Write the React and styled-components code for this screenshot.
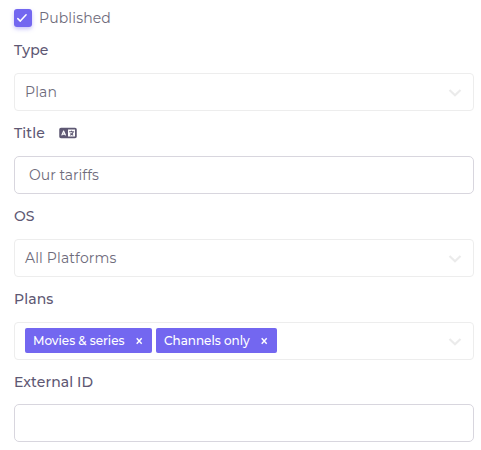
import React, { useState } from 'react';
import styled, { createGlobalStyle, ThemeProvider } from 'styled-components';
import { FaLanguage } from 'react-icons/fa6';

const theme = {
	colors: {
		primary: '#7367f0',
		label: '#5e5873',
		text: '#6e6b7b',
		border: '#d8d6de',
		lightBorder: '#ededed',
		arrow: '#ebebeb'
	}
};

const GlobalStyle = createGlobalStyle`
	* {
		box-sizing: border-box;
	}
	body {
		margin: 0;
		background: #fff;
		font-family: Montserrat, Inter, sans-serif;
		font-size: 14px;
		letter-spacing: .14px;
		color: ${({ theme }) => theme.colors.text};
	}
`;

const Form = styled.form`
	width: 481px;
	padding: 8px 7px 0 14px;
`;
const Text = styled.span`
	white-space: nowrap;
`;
const CheckRow = styled.label`
	display: flex;
	align-items: center;
	gap: 7px;
	height: 20px;
	cursor: pointer;
`;
const HiddenCheckbox = styled.input`display: none;`;
const Box = styled.span`
	display: flex;
	align-items: center;
	justify-content: center;
	width: 18px;
	height: 18px;
	border-radius: 3px;
	background: ${({ theme, $checked }) => ($checked ? theme.colors.primary : '#fff')};
	box-shadow: 0 2px 4px 0 rgba(115, 103, 240, .4);
	svg {
		margin-right: 2px;
	}
`;
const Group = styled.div`
	height: 83px;
	padding-top: 11px;
`;
const Label = styled.div`
	display: flex;
	align-items: center;
	gap: 14px;
	height: 21px;
	margin-bottom: ${({ $gap }) => $gap || 13}px;
	color: ${({ theme }) => theme.colors.label};
	font-weight: 500;
	letter-spacing: .09px;
	svg {
		width: 18px;
		height: 14px;
	}
`;
const Control = styled.div`
	display: flex;
	align-items: center;
	width: 460px;
	height: 38px;
	padding: 0 11px 0 10px;
	border: 1px solid ${({ theme }) => theme.colors.lightBorder};
	border-radius: 4px;
	background: #fff;
`;
const Input = styled.input`
	display: block;
	width: 460px;
	height: 38px;
	padding: 0 14px;
	border: 1px solid ${({ theme }) => theme.colors.border};
	border-radius: 5px;
	outline: none;
	background: #fff;
	color: inherit;
	font: inherit;
	letter-spacing: 0;
`;
const Chip = styled.span`
	display: flex;
	align-items: center;
	justify-content: space-between;
	width: ${({ $width }) => $width}px;
	height: 25px;
	margin: 0 4px 1px 0;
	padding: 0 9px 0 8px;
	border-radius: 2px;
	background: ${({ theme }) => theme.colors.primary};
	color: #fff;
	font-size: 12px;
	font-weight: 500;
	letter-spacing: -.03px;
`;
const Remove = styled.button`
	display: flex;
	padding: 0;
	border: none;
	background: none;
	cursor: pointer;
`;
const Indicator = styled.svg`
	margin: 1px 0 0 auto;
`;

const Arrow = () => (
	<Indicator width="14" height="8" viewBox="0 0 14 8" fill="none" stroke={theme.colors.arrow} strokeWidth="2.2">
		<path d="M1.5 1 7 6.2 12.5 1" />
	</Indicator>
);

const Cross = () => (
	<svg width="8" height="8" viewBox="0 0 8 8" fill="none" stroke="#fff" strokeWidth="1.4">
		<path d="M1.7 1.2 6.7 6.8M6.7 1.2 1.7 6.8" />
	</svg>
);

const Field = ({ label, gap, icon, children }) => (
	<Group>
		<Label $gap={gap}>
			<Text>{label}</Text>
			{icon}
		</Label>
		{children}
	</Group>
);

const initialPlans = [
	{ name: 'Movies & series', width: 127 },
	{ name: 'Channels only', width: 121 }
];

const App = () => {
	const [ published, setPublished ] = useState(true);
	const [ title, setTitle ] = useState('Our tariffs');
	const [ externalId, setExternalId ] = useState('');
	const [ plans, setPlans ] = useState(initialPlans);

	return (
		<ThemeProvider theme={theme}>
			<GlobalStyle />
			<Form>
				<CheckRow>
					<HiddenCheckbox type="checkbox" checked={published} onChange={() => setPublished(!published)} />
					<Box $checked={published}>
						<svg width="12" height="12" viewBox="0 0 12 12" fill="none" stroke="#fff" strokeWidth="1.5" strokeLinecap="round" strokeLinejoin="round">
							<path d="M1.8 6.6 4.3 9.1 10.1 2.7" />
						</svg>
					</Box>
					<Text>Published</Text>
				</CheckRow>
				<Field label="Type">
					<Control>
						<Text>Plan</Text>
						<Arrow />
					</Control>
				</Field>
				<Field label="Title" icon={<FaLanguage />}>
					<Input value={title} onChange={(e) => setTitle(e.target.value)} />
				</Field>
				<Field label="OS">
					<Control>
						<Text>All Platforms</Text>
						<Arrow />
					</Control>
				</Field>
				<Field label="Plans">
					<Control>
						{plans.map(({ name, width }) => (
							<Chip key={name} $width={width}>
								<Text>{name}</Text>
								<Remove type="button" onClick={() => setPlans(plans.filter((plan) => plan.name !== name))}>
									<Cross />
								</Remove>
							</Chip>
						))}
						<Arrow />
					</Control>
				</Field>
				<Field label="External ID" gap={12}>
					<Input value={externalId} onChange={(e) => setExternalId(e.target.value)} />
				</Field>
			</Form>
		</ThemeProvider>
	);
};

export default App;
